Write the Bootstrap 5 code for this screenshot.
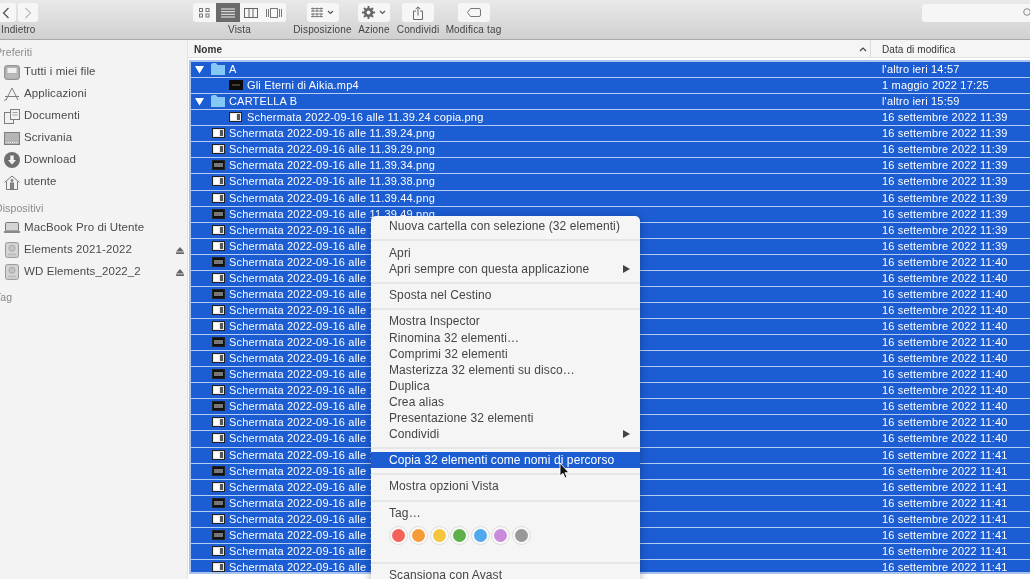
<!DOCTYPE html>
<html lang="it">
<head>
<meta charset="utf-8">
<title>Finder</title>
<link href="https://cdn.jsdelivr.net/npm/bootstrap@5.3.0/dist/css/bootstrap.min.css" rel="stylesheet">
<style>
html,body{margin:0;height:100%;overflow:hidden;background:#fff}
body{font-family:"Liberation Sans",Arial,sans-serif;font-size:12px;color:#3c3c3c;letter-spacing:.1px}
.app{width:1030px;height:579px;overflow:hidden;position:relative;filter:blur(.4px)}
.tb{height:40px;background:linear-gradient(#e9e9e9,#d0d0d0);border-bottom:1px solid #a9a9a9;position:relative;color:#444;flex:none}
.tb-inner{height:39px;padding-top:3px}
.tool{display:flex;flex-direction:column;align-items:center;flex:none}
.tool small{font-size:10px;line-height:12px;margin-top:2px;white-space:nowrap;letter-spacing:.15px}
.btnbox{height:19px;background:#f6f6f6;border-radius:3px;display:flex;align-items:center;justify-content:center;gap:4px}
.w32{width:32px}
.seg{width:23.25px;height:19px;display:flex;align-items:center;justify-content:center}
.seg.on{background:#6b6b6b}
.nav-b{width:20px}
.nav-b + .nav-b{margin-left:2px}
.t-back{margin-left:-4px;width:44px;align-items:flex-start}
.t-back small{margin-left:5px}
.t-view{margin-left:153px;width:93px}
.t-dis{margin-left:8px;width:57px}
.t-az{margin-left:7px;width:32px}
.t-con{margin-left:7px;width:42px}
.t-tag{margin-left:7px;width:55px}
.search{margin-left:421px;width:120px;height:18px;background:#f6f6f6;border-radius:3px;margin-top:1px;position:relative;flex:none}
.search svg{position:absolute;left:101px;top:4px}
.main{height:539px}
.side{width:188px;background:#f3f3f3;flex:none;color:#4a4a4a;border-right:1px solid #e4e4e4;padding-top:6px;font-size:11.5px}
.sec{font-size:10.5px;color:#8a8a8a;line-height:13px;margin-left:-5px;margin-bottom:2px}
.si + .sec{margin-top:8.5px}
.si{height:22px;display:flex;align-items:center;padding-left:4px;gap:4px;white-space:nowrap;position:relative}
.si svg{flex:none}
.si .ej{position:absolute;left:176px;top:8px}
.cont{flex:1;min-width:0;background:#fff}
.hd{height:18px;background:#f5f5f5;border-bottom:1px solid #e3e3e3;font-size:10px;line-height:19px;color:#333}
.hd-n{flex:1;padding-left:6px;font-weight:600;position:relative}
.hd-d{width:160px;padding-left:11px;flex:none;border-left:1px solid #ddd}
.sort{position:absolute;right:3px;top:7px}
.list{margin:2px 0 0 1px;border:2px solid #a9c3ee;border-right:0;height:514px;overflow:hidden}
.r{height:16.07px;background:#1c5dd3;border-bottom:1px solid #b4ccf1;color:#fff;line-height:15px;white-space:nowrap;font-size:11px;letter-spacing:.18px}
.r .n{flex:1;position:relative;padding-left:38px;overflow:hidden}
.r .d{width:148px;flex:none}
.r.c .n{padding-left:56px}
.r svg{position:absolute;top:2px}
.r .ic{left:21px}
.r.c .ic{left:38px}
.r .tw{left:4px;top:4px}
.r .fo{left:20px;top:1px}
.menu{position:absolute;left:371px;top:216px;width:269px;height:380px;background:#f5f5f5;border-radius:5px 5px 0 0;box-shadow:0 2px 10px rgba(0,0,0,.3);padding-top:2.4px;color:#454545}
.mi{height:16.05px;line-height:16px;padding-left:18px;position:relative;white-space:nowrap}
.mi.act{background:#1c5dd3;color:#fff}
.mi .ar{position:absolute;right:10px;top:4px}
.sep{height:2px;background:#e6e6e6;margin:5px 0 3.3px}
.tags{height:23px;padding-left:17.5px;gap:1.5px;margin-top:3.5px;margin-bottom:14.5px}
.dot{width:19px;height:19px;border-radius:50%;background:#fafafa;border:1px solid #dedede;display:flex;align-items:center;justify-content:center;flex:none}
.dot i{display:block;width:13px;height:13px;border-radius:50%}
.c-red{background:#f4605a}.c-ora{background:#f59c37}.c-yel{background:#f5c63c}.c-gre{background:#5eb14a}.c-blu{background:#50a8ee}.c-pur{background:#c98bdc}.c-gra{background:#989898}
.cur{position:absolute;left:559px;top:462px}
</style>
</head>
<body>
<svg width="0" height="0" class="position-absolute">
<symbol id="shot" viewBox="0 0 13 10"><rect x=".5" y=".5" width="12" height="9" fill="#e8e8e8" stroke="#222"/><rect x="2" y="2" width="5" height="6" fill="#fff"/><rect x="8" y="2" width="3" height="6" fill="#555"/></symbol>
<symbol id="shotd" viewBox="0 0 13 10"><rect x=".5" y=".5" width="12" height="9" fill="#111" stroke="#222"/><rect x="2" y="3" width="9" height="4" fill="#777"/></symbol>
<symbol id="fold" viewBox="0 0 14 12"><path d="M0 2 Q0 0 2 0H5L6.5 2H14V12H0Z" fill="#86c8f5"/></symbol>
<symbol id="twist" viewBox="0 0 9 8"><path d="M0 0H9L4.5 7.5Z" fill="#fff"/></symbol>
<symbol id="eject" viewBox="0 0 9 8"><path d="M4.5 0L9 5H0ZM0 6H9V8H0Z" fill="#666"/></symbol>
<symbol id="disk" viewBox="0 0 16 18"><rect x=".7" y=".7" width="14.6" height="16.6" rx="2" fill="#d6d6d6" stroke="#8c8c8c"/><circle cx="8" cy="7" r="3.5" fill="#c4c4c4" stroke="#a5a5a5"/><rect x="3" y="13" width="10" height="2" fill="#bbb"/></symbol>
</svg>
<div class="app d-flex flex-column">
  <div class="tb">
    <div class="tb-inner d-flex">
      <div class="tool t-back">
        <div class="d-flex"><div class="btnbox nav-b"><svg width="8" height="12" viewBox="0 0 8 12"><path d="M6.5 1L1.5 6l5 5" fill="none" stroke="#555" stroke-width="1.3"/></svg></div><div class="btnbox nav-b"><svg width="8" height="12" viewBox="0 0 8 12"><path d="M1.5 1l5 5-5 5" fill="none" stroke="#bbb" stroke-width="1.3"/></svg></div></div>
        <small>Indietro</small>
      </div>
      <div class="tool t-view">
        <div class="btnbox gap-0">
          <div class="seg"><svg width="11" height="10" viewBox="0 0 11 10" fill="none" stroke="#777"><rect x=".5" y=".5" width="3" height="3"/><rect x="7" y=".5" width="3" height="3"/><rect x=".5" y="6" width="3" height="3"/><rect x="7" y="6" width="3" height="3"/></svg></div>
          <div class="seg on"><svg width="14" height="10" viewBox="0 0 14 10" stroke="#f0f0f0"><path d="M0 1H14M0 3.700H14M0 6.300H14M0 9H14"/></svg></div>
          <div class="seg"><svg width="14" height="10" viewBox="0 0 14 10" fill="none" stroke="#666"><rect x=".5" y=".5" width="13" height="9"/><path d="M5 .5V9.500M9 .5V9.500"/></svg></div>
          <div class="seg"><svg width="16" height="10" viewBox="0 0 16 10" fill="none" stroke="#777"><rect x="4.500" y=".5" width="7" height="9"/><path d="M.5 1V9M2.500 1V9M13.500 1V9M15.500 1V9"/></svg></div>
        </div>
        <small>Vista</small>
      </div>
      <div class="tool t-dis">
        <div class="btnbox w32"><svg width="12" height="11" viewBox="0 0 12 11" fill="none" stroke="#777" stroke-width=".9"><path d="M0 1.500H12M0 4H12M0 7H12M0 9.500H12M2 .5V5M6 .5V5M10 .5V5M2 6V10.500M6 6V10.500M10 6V10.500"/></svg><svg width="7" height="5" viewBox="0 0 7 5"><path d="M1 1l2.500 2.500L6 1" fill="none" stroke="#555" stroke-width="1.100"/></svg></div>
        <small>Disposizione</small>
      </div>
      <div class="tool t-az">
        <div class="btnbox w32"><svg width="13" height="13" viewBox="0 0 13 13"><circle cx="6.500" cy="6.500" r="3.300" fill="none" stroke="#666" stroke-width="2.600"/><path d="M6.500 0v13M0 6.500h13M2 2l9 9M11 2l-9 9" stroke="#666" stroke-width="1.900"/><circle cx="6.500" cy="6.500" r="1.900" fill="#f6f6f6"/></svg><svg width="7" height="5" viewBox="0 0 7 5"><path d="M1 1l2.500 2.500L6 1" fill="none" stroke="#555" stroke-width="1.100"/></svg></div>
        <small>Azione</small>
      </div>
      <div class="tool t-con">
        <div class="btnbox w32"><svg width="10" height="14" viewBox="0 0 10 14" fill="none" stroke="#666"><path d="M3 5H.5V13.500H9.500V5H7M5 9.500V1M2.800 3L5 .8 7.200 3"/></svg></div>
        <small>Condividi</small>
      </div>
      <div class="tool t-tag">
        <div class="btnbox w32"><svg width="14" height="9" viewBox="0 0 14 9" fill="none" stroke="#777"><path d="M3.500 .5H12a1.500 1.500 0 0 1 1.500 1.500V7A1.500 1.500 0 0 1 12 8.500H3.500L.5 4.500Z"/></svg></div>
        <small>Modifica tag</small>
      </div>
      <div class="search"><svg width="9" height="9" viewBox="0 0 9 9" fill="none" stroke="#888"><circle cx="4" cy="4" r="3.300"/><path d="M6.500 6.500L9 9"/></svg></div>
    </div>
  </div>
  <div class="main d-flex">
    <div class="side">
      <div class="sec">Preferiti</div>
      <div class="si"><svg width="16" height="15" viewBox="0 0 16 15"><rect x=".7" y=".7" width="14.600" height="13.600" rx="2" fill="#b9b9b9" stroke="#808080"/><rect x="3" y="2.500" width="10" height="6" fill="#f0f0f0" stroke="#999" stroke-width=".6"/></svg>Tutti i miei file</div>
      <div class="si"><svg width="16" height="15" viewBox="0 0 16 15" fill="none" stroke="#7d7d7d" stroke-width="1"><path d="M8 1L2 13M8 1l6 12M1 9.500h14M0 13.500L3 12"/></svg>Applicazioni</div>
      <div class="si"><svg width="16" height="15" viewBox="0 0 16 15" fill="#f1f1f1" stroke="#7d7d7d"><rect x=".5" y="3.500" width="9" height="11"/><rect x="6.500" y=".5" width="9" height="10"/><path d="M8.500 3.500h5M8.500 6h5" stroke-width=".7"/></svg>Documenti</div>
      <div class="si"><svg width="16" height="13" viewBox="0 0 16 13"><rect x=".5" y=".5" width="15" height="12" fill="#b5b5b5" stroke="#7d7d7d"/><path d="M2 10.500h12" stroke="#eee" stroke-dasharray="1 1"/></svg>Scrivania</div>
      <div class="si"><svg width="16" height="16" viewBox="0 0 16 16"><circle cx="8" cy="8" r="8" fill="#6f6f6f"/><path d="M6.300 3.500h3.400v4.500h2.300L8 12.500 4 8h2.300Z" fill="#f3f3f3"/></svg>Download</div>
      <div class="si"><svg width="16" height="15" viewBox="0 0 16 15" fill="none" stroke="#777"><path d="M.5 7.500L8 1l7.500 6.500M2.500 6.500V14.500H13.500V6.500"/><rect x="6.500" y="8" width="3" height="6.500" fill="#888"/><circle cx="8" cy="5.500" r="1" fill="#888"/></svg>utente</div>
      <div class="sec">Dispositivi</div>
      <div class="si"><svg width="16" height="11" viewBox="0 0 16 11"><rect x="1.500" y=".5" width="13" height="8.500" rx="1" fill="#d4d4d4" stroke="#777"/><rect y="9" width="16" height="2" fill="#8a8a8a"/></svg>MacBook Pro di Utente</div>
      <div class="si"><svg width="16" height="16"><use href="#disk"/></svg>Elements 2021-2022<svg class="ej" width="8" height="7"><use href="#eject"/></svg></div>
      <div class="si"><svg width="16" height="16"><use href="#disk"/></svg>WD Elements_2022_2<svg class="ej" width="8" height="7"><use href="#eject"/></svg></div>
      <div class="sec">Tag</div>
    </div>
    <div class="cont">
      <div class="hd d-flex">
        <div class="hd-n">Nome<svg class="sort" width="8" height="5" viewBox="0 0 8 5"><path d="M1 4l3-3 3 3" fill="none" stroke="#444" stroke-width="1.200"/></svg></div>
        <div class="hd-d">Data di modifica</div>
      </div>
      <div class="list">
        <div class="r d-flex"><div class="n"><svg class="tw" width="9" height="8"><use href="#twist"/></svg><svg class="fo" width="14" height="12"><use href="#fold"/></svg>A</div><div class="d">l'altro ieri 14:57</div></div>
        <div class="r c d-flex"><div class="n"><svg class="ic" width="14" height="10" viewBox="0 0 14 10"><rect width="14" height="10" fill="#0b0b0b"/><rect x="3" y="4" width="8" height="2" fill="#4a3a2a"/></svg>Gli Eterni di Aikia.mp4</div><div class="d">1 maggio 2022 17:25</div></div>
        <div class="r d-flex"><div class="n"><svg class="tw" width="9" height="8"><use href="#twist"/></svg><svg class="fo" width="14" height="12"><use href="#fold"/></svg>CARTELLA B</div><div class="d">l'altro ieri 15:59</div></div>
        <div class="r c d-flex"><div class="n"><svg class="ic" width="13" height="10"><use href="#shot"/></svg>Schermata 2022-09-16 alle 11.39.24 copia.png</div><div class="d">16 settembre 2022 11:39</div></div>
        <div class="r d-flex"><div class="n"><svg class="ic" width="13" height="10"><use href="#shot"/></svg>Schermata 2022-09-16 alle 11.39.24.png</div><div class="d">16 settembre 2022 11:39</div></div>
        <div class="r d-flex"><div class="n"><svg class="ic" width="13" height="10"><use href="#shot"/></svg>Schermata 2022-09-16 alle 11.39.29.png</div><div class="d">16 settembre 2022 11:39</div></div>
        <div class="r d-flex"><div class="n"><svg class="ic" width="13" height="10"><use href="#shotd"/></svg>Schermata 2022-09-16 alle 11.39.34.png</div><div class="d">16 settembre 2022 11:39</div></div>
        <div class="r d-flex"><div class="n"><svg class="ic" width="13" height="10"><use href="#shot"/></svg>Schermata 2022-09-16 alle 11.39.38.png</div><div class="d">16 settembre 2022 11:39</div></div>
        <div class="r d-flex"><div class="n"><svg class="ic" width="13" height="10"><use href="#shot"/></svg>Schermata 2022-09-16 alle 11.39.44.png</div><div class="d">16 settembre 2022 11:39</div></div>
        <div class="r d-flex"><div class="n"><svg class="ic" width="13" height="10"><use href="#shotd"/></svg>Schermata 2022-09-16 alle 11.39.49.png</div><div class="d">16 settembre 2022 11:39</div></div>
        <div class="r d-flex"><div class="n"><svg class="ic" width="13" height="10"><use href="#shot"/></svg>Schermata 2022-09-16 alle 11.39.53.png</div><div class="d">16 settembre 2022 11:39</div></div>
        <div class="r d-flex"><div class="n"><svg class="ic" width="13" height="10"><use href="#shot"/></svg>Schermata 2022-09-16 alle 11.39.58.png</div><div class="d">16 settembre 2022 11:39</div></div>
        <div class="r d-flex"><div class="n"><svg class="ic" width="13" height="10"><use href="#shotd"/></svg>Schermata 2022-09-16 alle 11.40.03.png</div><div class="d">16 settembre 2022 11:40</div></div>
        <div class="r d-flex"><div class="n"><svg class="ic" width="13" height="10"><use href="#shot"/></svg>Schermata 2022-09-16 alle 11.40.08.png</div><div class="d">16 settembre 2022 11:40</div></div>
        <div class="r d-flex"><div class="n"><svg class="ic" width="13" height="10"><use href="#shotd"/></svg>Schermata 2022-09-16 alle 11.40.12.png</div><div class="d">16 settembre 2022 11:40</div></div>
        <div class="r d-flex"><div class="n"><svg class="ic" width="13" height="10"><use href="#shot"/></svg>Schermata 2022-09-16 alle 11.40.17.png</div><div class="d">16 settembre 2022 11:40</div></div>
        <div class="r d-flex"><div class="n"><svg class="ic" width="13" height="10"><use href="#shot"/></svg>Schermata 2022-09-16 alle 11.40.22.png</div><div class="d">16 settembre 2022 11:40</div></div>
        <div class="r d-flex"><div class="n"><svg class="ic" width="13" height="10"><use href="#shotd"/></svg>Schermata 2022-09-16 alle 11.40.27.png</div><div class="d">16 settembre 2022 11:40</div></div>
        <div class="r d-flex"><div class="n"><svg class="ic" width="13" height="10"><use href="#shot"/></svg>Schermata 2022-09-16 alle 11.40.31.png</div><div class="d">16 settembre 2022 11:40</div></div>
        <div class="r d-flex"><div class="n"><svg class="ic" width="13" height="10"><use href="#shotd"/></svg>Schermata 2022-09-16 alle 11.40.36.png</div><div class="d">16 settembre 2022 11:40</div></div>
        <div class="r d-flex"><div class="n"><svg class="ic" width="13" height="10"><use href="#shot"/></svg>Schermata 2022-09-16 alle 11.40.41.png</div><div class="d">16 settembre 2022 11:40</div></div>
        <div class="r d-flex"><div class="n"><svg class="ic" width="13" height="10"><use href="#shotd"/></svg>Schermata 2022-09-16 alle 11.40.45.png</div><div class="d">16 settembre 2022 11:40</div></div>
        <div class="r d-flex"><div class="n"><svg class="ic" width="13" height="10"><use href="#shot"/></svg>Schermata 2022-09-16 alle 11.40.50.png</div><div class="d">16 settembre 2022 11:40</div></div>
        <div class="r d-flex"><div class="n"><svg class="ic" width="13" height="10"><use href="#shot"/></svg>Schermata 2022-09-16 alle 11.40.55.png</div><div class="d">16 settembre 2022 11:40</div></div>
        <div class="r d-flex"><div class="n"><svg class="ic" width="13" height="10"><use href="#shot"/></svg>Schermata 2022-09-16 alle 11.41.00.png</div><div class="d">16 settembre 2022 11:41</div></div>
        <div class="r d-flex"><div class="n"><svg class="ic" width="13" height="10"><use href="#shotd"/></svg>Schermata 2022-09-16 alle 11.41.05.png</div><div class="d">16 settembre 2022 11:41</div></div>
        <div class="r d-flex"><div class="n"><svg class="ic" width="13" height="10"><use href="#shot"/></svg>Schermata 2022-09-16 alle 11.41.09.png</div><div class="d">16 settembre 2022 11:41</div></div>
        <div class="r d-flex"><div class="n"><svg class="ic" width="13" height="10"><use href="#shotd"/></svg>Schermata 2022-09-16 alle 11.41.14.png</div><div class="d">16 settembre 2022 11:41</div></div>
        <div class="r d-flex"><div class="n"><svg class="ic" width="13" height="10"><use href="#shot"/></svg>Schermata 2022-09-16 alle 11.41.19.png</div><div class="d">16 settembre 2022 11:41</div></div>
        <div class="r d-flex"><div class="n"><svg class="ic" width="13" height="10"><use href="#shotd"/></svg>Schermata 2022-09-16 alle 11.41.24.png</div><div class="d">16 settembre 2022 11:41</div></div>
        <div class="r d-flex"><div class="n"><svg class="ic" width="13" height="10"><use href="#shot"/></svg>Schermata 2022-09-16 alle 11.41.28.png</div><div class="d">16 settembre 2022 11:41</div></div>
        <div class="r d-flex"><div class="n"><svg class="ic" width="13" height="10"><use href="#shot"/></svg>Schermata 2022-09-16 alle 11.41.33.png</div><div class="d">16 settembre 2022 11:41</div></div>
      </div>
    </div>
  </div>
  <div class="menu">
    <div class="mi">Nuova cartella con selezione (32 elementi)</div>
    <div class="sep"></div>
    <div class="mi">Apri</div>
    <div class="mi">Apri sempre con questa applicazione<svg class="ar" width="7" height="8" viewBox="0 0 7 8"><path d="M0 0L7 4 0 8Z" fill="#444"/></svg></div>
    <div class="sep"></div>
    <div class="mi">Sposta nel Cestino</div>
    <div class="sep"></div>
    <div class="mi">Mostra Inspector</div>
    <div class="mi">Rinomina 32 elementi…</div>
    <div class="mi">Comprimi 32 elementi</div>
    <div class="mi">Masterizza 32 elementi su disco…</div>
    <div class="mi">Duplica</div>
    <div class="mi">Crea alias</div>
    <div class="mi">Presentazione 32 elementi</div>
    <div class="mi">Condividi<svg class="ar" width="7" height="8" viewBox="0 0 7 8"><path d="M0 0L7 4 0 8Z" fill="#444"/></svg></div>
    <div class="sep"></div>
    <div class="mi act">Copia 32 elementi come nomi di percorso</div>
    <div class="sep"></div>
    <div class="mi">Mostra opzioni Vista</div>
    <div class="sep"></div>
    <div class="mi">Tag…</div>
    <div class="tags d-flex align-items-center">
      <div class="dot"><i class="c-red"></i></div>
      <div class="dot"><i class="c-ora"></i></div>
      <div class="dot"><i class="c-yel"></i></div>
      <div class="dot"><i class="c-gre"></i></div>
      <div class="dot"><i class="c-blu"></i></div>
      <div class="dot"><i class="c-pur"></i></div>
      <div class="dot"><i class="c-gra"></i></div>
    </div>
    <div class="sep"></div>
    <div class="mi">Scansiona con Avast</div>
  </div>
  <svg class="cur" width="11" height="17" viewBox="0 0 11 17"><path d="M1 1V14L4 11.300 6 16 8 15.200 6 10.700H10Z" fill="#111" stroke="#fff" stroke-width=".9"/></svg>
</div>
<script src="https://cdn.jsdelivr.net/npm/bootstrap@5.3.0/dist/js/bootstrap.bundle.min.js"></script>
</body>
</html>
